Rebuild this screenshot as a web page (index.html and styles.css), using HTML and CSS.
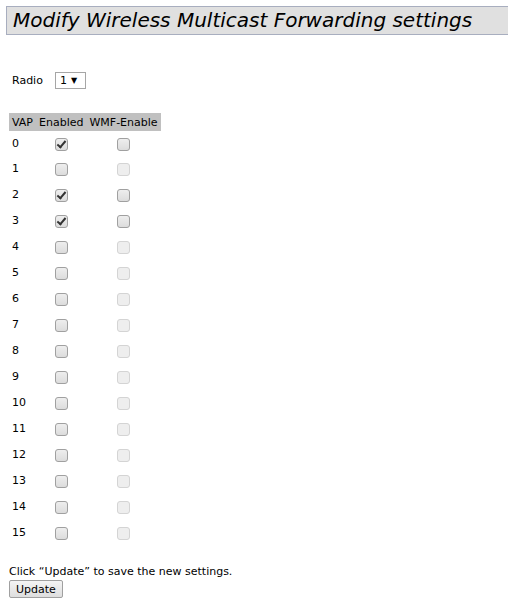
FILE: index.html
```html
<!DOCTYPE html>
<html>
<head>
<meta charset="utf-8">
<link rel="stylesheet" href="styles.css">
</head>
<body>
<div class="title">Modify Wireless Multicast Forwarding settings</div>
<div class="radio-row">
  <span class="lbl">Radio</span>
  <span class="select">1 <span class="arrow">▼</span></span>
</div>
<table class="vap">
  <thead>
    <tr><th>VAP</th><th>Enabled</th><th>WMF-Enable</th></tr>
  </thead>
  <tbody>
    <tr><td>0</td><td class="c"><input type="checkbox" checked></td><td class="c"><input type="checkbox"></td></tr>
    <tr><td>1</td><td class="c"><input type="checkbox"></td><td class="c"><input type="checkbox" disabled></td></tr>
    <tr><td>2</td><td class="c"><input type="checkbox" checked></td><td class="c"><input type="checkbox"></td></tr>
    <tr><td>3</td><td class="c"><input type="checkbox" checked></td><td class="c"><input type="checkbox"></td></tr>
    <tr><td>4</td><td class="c"><input type="checkbox"></td><td class="c"><input type="checkbox" disabled></td></tr>
    <tr><td>5</td><td class="c"><input type="checkbox"></td><td class="c"><input type="checkbox" disabled></td></tr>
    <tr><td>6</td><td class="c"><input type="checkbox"></td><td class="c"><input type="checkbox" disabled></td></tr>
    <tr><td>7</td><td class="c"><input type="checkbox"></td><td class="c"><input type="checkbox" disabled></td></tr>
    <tr><td>8</td><td class="c"><input type="checkbox"></td><td class="c"><input type="checkbox" disabled></td></tr>
    <tr><td>9</td><td class="c"><input type="checkbox"></td><td class="c"><input type="checkbox" disabled></td></tr>
    <tr><td>10</td><td class="c"><input type="checkbox"></td><td class="c"><input type="checkbox" disabled></td></tr>
    <tr><td>11</td><td class="c"><input type="checkbox"></td><td class="c"><input type="checkbox" disabled></td></tr>
    <tr><td>12</td><td class="c"><input type="checkbox"></td><td class="c"><input type="checkbox" disabled></td></tr>
    <tr><td>13</td><td class="c"><input type="checkbox"></td><td class="c"><input type="checkbox" disabled></td></tr>
    <tr><td>14</td><td class="c"><input type="checkbox"></td><td class="c"><input type="checkbox" disabled></td></tr>
    <tr><td>15</td><td class="c"><input type="checkbox"></td><td class="c"><input type="checkbox" disabled></td></tr>
  </tbody>
</table>
<p class="hint">Click “Update” to save the new settings.</p>
<button class="btn">Update</button>
</body>
</html>
```

FILE: styles.css
```css
html, body {
  margin: 0;
  padding: 0;
  background: #fff;
}
body {
  font-family: "DejaVu Sans", Verdana, sans-serif;
  font-size: 11px;
  color: #000;
  padding: 6px 0 0 0;
}
.title {
  margin-left: 6px;
  background: #e0e0e0;
  border: 1px solid #a8aebf;
  border-right: none;
  height: 27px;
  padding-left: 6px;
  font-style: italic;
  font-size: 20px;
  line-height: 27px;
  color: #000;
  white-space: nowrap;
}
.radio-row {
  display: flex;
  align-items: center;
  margin: 36px 0 0 12px;
  gap: 12px;
  height: 18px;
}
.select {
  display: inline-flex;
  align-items: center;
  box-sizing: border-box;
  height: 17px;
  width: 31px;
  border: 1px solid #a6a6a6;
  padding-left: 4px;
  gap: 4px;
  font-size: 11px;
}
.arrow {
  font-size: 8px;
}
.vap {
  border-collapse: collapse;
  margin: 24px 0 0 9px;
}
.vap th {
  background: #c0c0c0;
  font-weight: normal;
  text-align: left;
  height: 18px;
  padding: 0 3px;
  white-space: nowrap;
}
.vap td {
  height: 26px;
  padding: 0 3px;
  vertical-align: middle;
}
.vap tbody tr:first-child td {
  height: 24px;
}
.vap td.c {
  text-align: center;
}
.vap input[type=checkbox] {
  appearance: none;
  -webkit-appearance: none;
  width: 13px;
  height: 13px;
  margin: 3px 0 0 0;
  box-sizing: border-box;
  border: 1px solid #a0a0a0;
  border-radius: 3px;
  background: linear-gradient(#eeeeee, #dcdcdc);
  vertical-align: middle;
  position: relative;
}
.vap input[type=checkbox]:checked::after {
  content: "";
  position: absolute;
  left: 3px;
  top: 0px;
  width: 3px;
  height: 7px;
  border: solid #333;
  border-width: 0 2px 2px 0;
  transform: rotate(40deg);
}
.vap input[type=checkbox]:disabled {
  border-color: #d4d4d4;
  background: #eeeeee;
}
.hint {
  margin: 20px 0 0 9px;
}
.btn {
  margin: 2px 0 0 9px;
  font-family: "DejaVu Sans", Verdana, sans-serif;
  font-size: 11px;
  height: 18px;
  padding: 0 6px;
  border: 1px solid #a0a0a0;
  border-radius: 2px;
  background: linear-gradient(#f4f4f4, #dedede);
  color: #000;
}
```
